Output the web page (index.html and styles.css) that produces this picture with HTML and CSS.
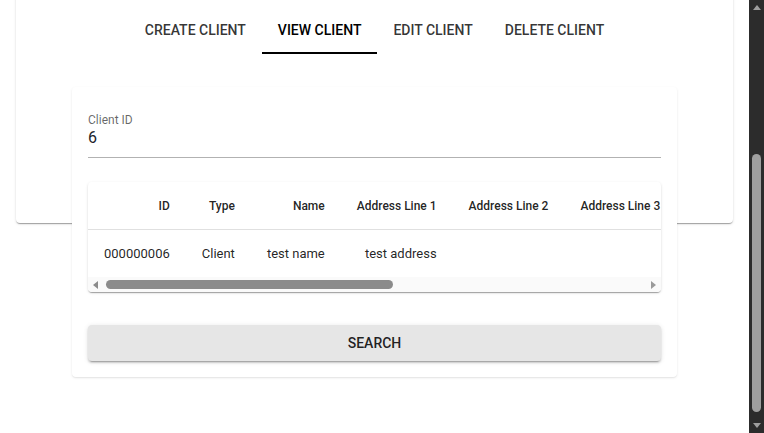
FILE: index.html
```html
<!DOCTYPE html>
<html lang="en">
<head>
<meta charset="utf-8">
<title>View Client</title>
<link rel="stylesheet" href="styles.css">
</head>
<body>
<div class="page">
  <div class="outer-card">
    <div class="header-space"></div>
    <div class="tabs">
      <div class="tab">CREATE CLIENT</div>
      <div class="tab active">VIEW CLIENT</div>
      <div class="tab">EDIT CLIENT</div>
      <div class="tab">DELETE CLIENT</div>
    </div>
    <div class="panel">
      <div class="inner-card">
        <div class="field">
          <div class="field-label">Client ID</div>
          <div class="field-value">6</div>
        </div>
        <div class="table-wrap">
          <div class="table-scroll">
            <table class="grid">
              <thead>
                <tr>
                  <th>ID</th>
                  <th>Type</th>
                  <th>Name</th>
                  <th>Address Line 1</th>
                  <th>Address Line 2</th>
                  <th>Address Line 3</th>
                </tr>
              </thead>
              <tbody>
                <tr>
                  <td>000000006</td>
                  <td>Client</td>
                  <td>test name</td>
                  <td>test address</td>
                  <td></td>
                  <td></td>
                </tr>
              </tbody>
            </table>
          </div>
          <div class="hbar">
            <div class="hbtn"><span class="tri-left"></span></div>
            <div class="htrack"><div class="hthumb"></div></div>
            <div class="hbtn"><span class="tri-right"></span></div>
          </div>
        </div>
        <button class="search-btn" type="button">SEARCH</button>
      </div>
    </div>
  </div>
</div>
<div class="vbar">
  <div class="vbtn"><span class="tri-up"></span></div>
  <div class="vtrack"><div class="vthumb"></div></div>
  <div class="vbtn"><span class="tri-down"></span></div>
</div>
<script src="script.js"></script>
</body>
</html>
```

FILE: styles.css
```css
html {
  background: #ffffff;
}

body {
  margin: 0;
  font-family: Roboto, "Liberation Sans", Arial, sans-serif;
  color: rgba(0, 0, 0, 0.87);
  background: #ffffff;
}

.page {
  box-sizing: border-box;
  min-height: 652px;
  padding: 16px 31px 16px 16px;
}

.outer-card {
  height: 426px;
  background: #fff;
  border-radius: 4px;
  box-shadow: 0 2px 1px -1px rgba(0,0,0,0.2), 0 1px 1px 0 rgba(0,0,0,0.14), 0 1px 3px 0 rgba(0,0,0,0.12);
}

.header-space {
  height: 209px;
}

.tabs {
  display: flex;
  justify-content: center;
  height: 48px;
}

.tab {
  box-sizing: border-box;
  height: 48px;
  padding: 2px 16px 0;
  display: flex;
  align-items: center;
  font-size: 14px;
  font-weight: 500;
  color: rgba(0, 0, 0, 0.8);
  border-bottom: 2px solid transparent;
}

.tab.active {
  color: #000;
  border-bottom-color: #000;
}

.panel {
  padding-top: 33px;
}

.inner-card {
  width: 605px;
  margin: 0 auto;
  box-sizing: border-box;
  padding: 16px;
  background: #fff;
  border-radius: 4px;
  box-shadow: 0 1px 3px 0 rgba(0,0,0,0.08), 0 1px 1px 0 rgba(0,0,0,0.05);
}

.field {
  padding-top: 10px;
  padding-bottom: 8px;
  border-bottom: 1px solid rgba(0, 0, 0, 0.3);
}

.field-label {
  font-size: 12px;
  line-height: 14px;
  color: rgba(0, 0, 0, 0.6);
}

.field-value {
  font-size: 16px;
  line-height: 22px;
  color: #1a1f2b;
}

.table-wrap {
  margin-top: 24px;
  border-radius: 4px;
  overflow: hidden;
  box-shadow: 0 2px 1px -1px rgba(0,0,0,0.2), 0 1px 1px 0 rgba(0,0,0,0.14), 0 1px 3px 0 rgba(0,0,0,0.12);
}

.table-scroll {
  overflow: hidden;
}

.grid {
  border-collapse: collapse;
  white-space: nowrap;
}

.grid th,
.grid td {
  padding: 0 16px;
  text-align: right;
  font-size: 13px;
}

.grid th {
  height: 47px;
  font-weight: 500;
  font-size: 12px;
  color: rgba(0, 0, 0, 0.87);
  border-bottom: 1px solid #e0e0e0;
}

.grid td {
  height: 47px;
  color: rgba(0, 0, 0, 0.87);
}

.hbar {
  display: flex;
  height: 15px;
  background: #fafafa;
}

.hbtn {
  width: 15px;
  display: flex;
  align-items: center;
  justify-content: center;
}

.htrack {
  flex: 1;
  padding: 3px 0;
  box-sizing: border-box;
}

.hthumb {
  width: 287px;
  height: 9px;
  margin-left: 3px;
  border-radius: 5px;
  background: #8b8b8b;
}

.tri-left {
  width: 0;
  height: 0;
  border-top: 4px solid transparent;
  border-bottom: 4px solid transparent;
  border-right: 5px solid #8b8b8b;
}

.tri-right {
  width: 0;
  height: 0;
  border-top: 4px solid transparent;
  border-bottom: 4px solid transparent;
  border-left: 5px solid #9a9a9a;
}

.search-btn {
  display: block;
  width: 100%;
  height: 36px;
  margin-top: 33px;
  border: none;
  border-radius: 4px;
  background: #e6e6e6;
  font-family: Roboto, "Liberation Sans", Arial, sans-serif;
  font-size: 14px;
  font-weight: 500;
  color: rgba(0, 0, 0, 0.87);
  box-shadow: 0 3px 1px -2px rgba(0,0,0,0.2), 0 2px 2px 0 rgba(0,0,0,0.14), 0 1px 5px 0 rgba(0,0,0,0.12);
}

.vbar {
  position: fixed;
  top: 0;
  right: 0;
  width: 15px;
  height: 100vh;
  display: flex;
  flex-direction: column;
  background: #2c2c2c;
}

.vbtn {
  height: 15px;
  display: flex;
  align-items: center;
  justify-content: center;
}

.vtrack {
  flex: 1;
  display: flex;
  flex-direction: column;
  padding: 139px 3px 6px;
}

.vthumb {
  flex: 1;
  border-radius: 5px;
  background: #9f9f9f;
}

.tri-up {
  width: 0;
  height: 0;
  border-left: 4px solid transparent;
  border-right: 4px solid transparent;
  border-bottom: 5px solid #9f9f9f;
}

.tri-down {
  width: 0;
  height: 0;
  border-left: 4px solid transparent;
  border-right: 4px solid transparent;
  border-top: 5px solid #9f9f9f;
}
```

FILE: script.js
```js
window.scrollTo(0, document.documentElement.scrollHeight);
```
